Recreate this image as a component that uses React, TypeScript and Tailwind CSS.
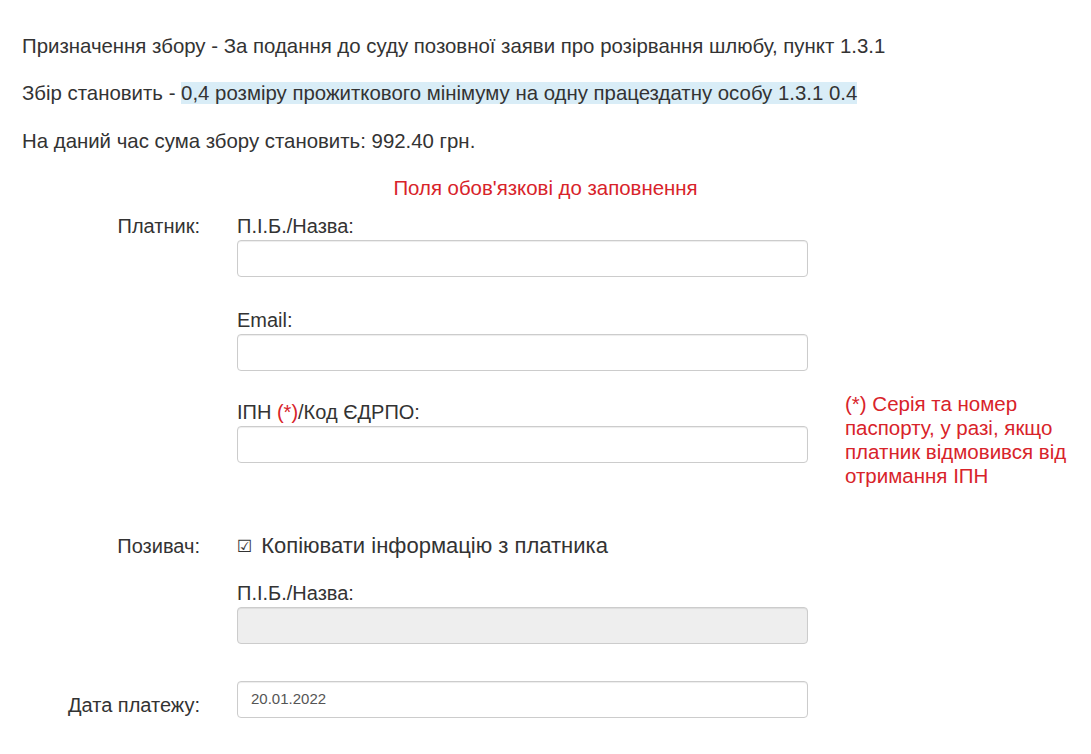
import React from "react";

const font = { fontFamily: '"Liberation Sans", Arial, sans-serif' };

function Field({ label, disabled, value }: { label?: React.ReactNode; disabled?: boolean; value?: string }) {
  return (
    <div>
      {label && <div className="text-[20px] leading-[24px] text-[#333] mb-[2px]">{label}</div>}
      <div
        className={`w-[571px] h-[37px] rounded-[4px] border border-[#ccc] shadow-[inset_0_1px_1px_rgba(0,0,0,0.075)] flex items-center px-[13px] text-[15px] text-[#555] ${
          disabled ? "bg-[#eee]" : "bg-white"
        }`}
      >
        {value}
      </div>
    </div>
  );
}

export default function App() {
  return (
    <div className="bg-white w-[1091px] h-[754px] overflow-hidden text-[#333]" style={font}>
      <div className="pl-[22px] pt-[34px] text-[20.4px] leading-[24px]">
        <p>Призначення збору - За подання до суду позовної заяви про розірвання шлюбу, пункт 1.3.1</p>
        <p className="mt-[23px]">
          Збір становить - <span className="bg-[#d9edf7]">0,4 розміру прожиткового мінімуму на одну працездатну особу 1.3.1 0.4</span>
        </p>
        <p className="mt-[24px]">На даний час сума збору становить: 992.40 грн.</p>
      </div>

      <div className="mt-[23px] text-center text-[#d8232a] text-[20.4px] leading-[24px]">Поля обов'язкові до заповнення</div>

      <div className="mt-[14px] flex">
        <div className="w-[200px] text-right text-[20px] leading-[24px]">Платник:</div>
        <div className="ml-[37px] flex flex-col">
          <Field label="П.І.Б./Назва:" />
          <div className="mt-[31px]">
            <Field label="Email:" />
          </div>
          <div className="mt-[29px]">
            <Field
              label={
                <>
                  ІПН <span className="text-[#d8232a]">(*)</span>/Код ЄДРПО:
                </>
              }
            />
          </div>
        </div>
        <div className="ml-[37px] mt-[178px] w-[232px] text-[20.5px] leading-[24px] text-[#d8232a]">
          (*) Серія та номер паспорту, у разі, якщо платник відмовився від отримання ІПН
        </div>
      </div>

      <div className="mt-[46px] flex">
        <div className="w-[200px] text-right text-[20px] leading-[24px]">Позивач:</div>
        <div className="ml-[37px] flex flex-col">
          <div className="flex items-center text-[22px] leading-[24px]">
            <span className="text-[17px] mr-[9px]" style={{ fontFamily: '"DejaVu Sans", sans-serif' }}>
              ☑
            </span>
            Копіювати інформацію з платника
          </div>
          <div className="mt-[23px]">
            <Field label="П.І.Б./Назва:" disabled />
          </div>
        </div>
      </div>

      <div className="mt-[37px] flex">
        <div className="w-[200px] text-right text-[20px] leading-[24px] pt-[12px]">Дата платежу:</div>
        <div className="ml-[37px]">
          <Field value="20.01.2022" />
        </div>
      </div>
    </div>
  );
}
